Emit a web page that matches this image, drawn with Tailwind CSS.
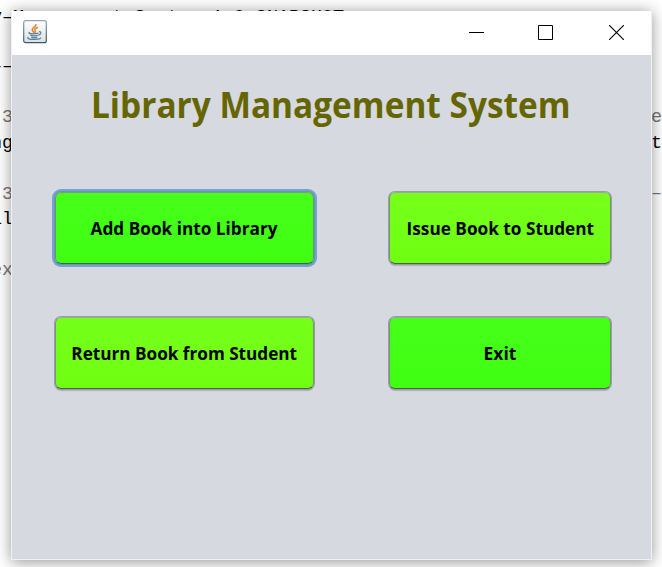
<!DOCTYPE html>
<html lang="en">
<head>
<meta charset="utf-8">
<title>Library Management System</title>
<script src="https://cdn.jsdelivr.net/npm/@tailwindcss/browser@4"></script>
</head>
<body class="relative h-[567px] w-[662px] overflow-hidden bg-white">
<!-- Console output behind the window -->
<div class="absolute inset-0 overflow-hidden whitespace-pre font-['Liberation_Mono',monospace] text-[18.4px] leading-[25.6px] text-black">
  <div class="absolute top-[5px] left-[-9px]">y–Management System 1.0-SNAPSHOT</div>
  <div class="absolute top-[54px] left-[-9px]">––</div>
  <div class="absolute top-[105px] left-[-9px] text-[#777]">:3</div>
  <div class="absolute top-[131px] left-[-9px]">ng</div>
  <div class="absolute top-[182px] left-[-9px] text-[#777]">.3</div>
  <div class="absolute top-[207px] left-[-9px]">il</div>
  <div class="absolute top-[258px] left-[-9px] text-[#777]">ex</div>
  <div class="absolute top-[105px] left-[651px] text-[#777]">e</div>
  <div class="absolute top-[131px] left-[651px]">t</div>
  <div class="absolute top-[181px] left-[651px] text-[#777]">–</div>
</div>
<!-- Application window -->
<div class="absolute top-[10px] left-[11px] flex h-[550px] w-[641px] flex-col border border-[#f0f0f0] border-t-transparent bg-[#d6d9df] bg-clip-padding shadow-[0_2px_14px_rgba(0,0,0,0.42)]">
  <header class="flex h-[44px] shrink-0 items-center bg-white pl-[11px]">
    <svg class="mb-[2px] h-[24px] w-[24px]" viewBox="0 0 24 24" fill="none">
      <defs><linearGradient id="g" x1="0" y1="0" x2="0" y2="1"><stop stop-color="#fff"/><stop offset="1" stop-color="#dedfe0"/></linearGradient><linearGradient id="b" x1="0" y1="0" x2="0" y2="1"><stop stop-color="#8ea5b3"/><stop offset="1" stop-color="#39576d"/></linearGradient></defs>
      <rect x=".7" y=".7" width="22.6" height="22" rx="2" fill="url(#g)" stroke="url(#b)" stroke-width="1.2"/>
      <path d="M13 4c1 2.500-4.500 3.600-3.800 6 .3 1.200 1.600 1.800 1.800 3M15 7.300c-2 .8-4 1.700-3 3.200.6 1 .5 1.600-.3 2.400" stroke="#e8822c" stroke-width="1.500"/>
      <path d="M7 12.300c-2 .8-.8 1.300 1 1.400 2.500.2 5.500 0 7.500-.5M7.500 15c1.500 1.200 5.500 1 7.500.2M8.300 17c1.500 1 4 .8 5.800.1M16 11.700c3-.3 2 3-.6 3.500M5.500 17.200c-3 1.400 2 2.300 6 2.200 4-.1 7-.7 6-1.700" stroke="#557f9f" stroke-width="1.200"/>
    </svg>
    <div class="mb-[1px] ml-auto flex items-center pr-[27px]">
      <svg class="mr-[54px] h-[15px] w-[15px]" viewBox="0 0 15 15" shape-rendering="crispEdges"><path d="M0 7h15v1H0z"/></svg>
      <svg class="mr-[56px] h-[15px] w-[15px]" viewBox="0 0 15 15" fill="none" stroke="#000"><path d="M.5.5h14v14H.5z"/></svg>
      <svg class="h-[15px] w-[15px]" viewBox="0 0 15 15" stroke="#000" stroke-width="1.100"><path d="M0 0l15 15M15 0L0 15"/></svg>
    </div>
  </header>
  <main class="font-['Open_Sans',sans-serif] font-bold">
    <h1 class="mt-[25px] ml-[79px] h-[50px] whitespace-nowrap text-[36px] leading-[50px] text-[#666600]"><span class="inline-block origin-left scale-x-[0.928]">Library Management System</span></h1>
    <div class="mt-[62px] ml-[43px] grid grid-cols-[259px_222px] gap-x-[75px] gap-y-[53px] text-[17.500px] whitespace-nowrap text-black">
      <button class="h-[72px] rounded-[6px] border border-[#659678] border-t-[#7b9f76] border-b-[#48634b] bg-linear-to-b from-[#46ff1a] to-[#3fff12] shadow-[0_0_0_1px_#6e93ae,0_0_0_3px_#73a4d1]"><span class="inline-block scale-x-[0.983]">Add Book into Library</span></button>
      <button class="h-[72px] rounded-[6px] border border-[#789577] border-t-[#98ac91] border-b-[#525e50] bg-linear-to-b from-[#76ff1a] to-[#6fff12] shadow-[0_0_0_1px_#979da3,0_2px_1px_#aeb1b6]"><span class="inline-block scale-x-[0.983]">Issue Book to Student</span></button>
      <button class="h-[72px] rounded-[6px] border border-[#789577] border-t-[#98ac91] border-b-[#525e50] bg-linear-to-b from-[#76ff1a] to-[#6fff12] shadow-[0_0_0_1px_#979da3,0_2px_1px_#aeb1b6]"><span class="inline-block scale-x-[0.98]">Return Book from Student</span></button>
      <button class="h-[72px] rounded-[6px] border border-[#789577] border-t-[#98ac91] border-b-[#525e50] bg-linear-to-b from-[#46ff1a] to-[#3fff12] shadow-[0_0_0_1px_#979da3,0_2px_1px_#aeb1b6]"><span>Exit</span></button>
    </div>
  </main>
</div>
</body>
</html>
